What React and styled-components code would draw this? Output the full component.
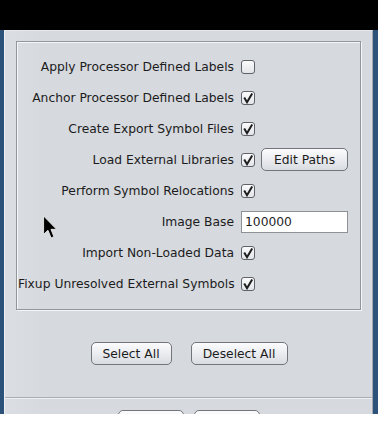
import React from "react";
import styled, { createGlobalStyle } from "styled-components";

const Global = createGlobalStyle`
  html, body { margin: 0; padding: 0; background: #ffffff; }
  body { font-family: "DejaVu Sans", "Liberation Sans", sans-serif; }
`;

const Screen = styled.div`
  position: relative;
  width: 378px;
  height: 414px;
  display: flex;
  flex-direction: column;
  overflow: hidden;
`;

const TopBar = styled.div`
  height: 30px;
  background: #000;
  flex: none;
`;

const Desktop = styled.div`
  flex: 1;
  display: flex;
  background: #2c5279;
  padding: 0 5px 0 4px;
  min-height: 0;
`;

const Window = styled.div`
  flex: 1;
  display: flex;
  flex-direction: column;
  background: linear-gradient(90deg, #dadde2 0%, #d6d9de 12%, #d6d9de 100%);
  border-left: 1px solid #eef0f3;
  border-top: 1px solid #e6e8eb;
  border-right: 1px solid #a3a6ab;
  overflow: hidden;
  font-size: 12.3px;
  color: #1c1c1c;
`;

const MainPanel = styled.div`
  display: flex;
  flex-direction: column;
  padding: 10px 11px 0 11px;
  height: 367px;
  box-sizing: border-box;
  border-bottom: 1px solid #a9acb1;
  flex: none;
`;

const Etched = styled.div`
  height: 269px;
  box-sizing: border-box;
  border: 1px solid #92959a;
  box-shadow: inset 1px 1px 0 #f5f6f8, 1px 1px 0 #f5f6f8;
  padding: 9px 0 0 1px;
  display: grid;
  grid-template-columns: 216px 1fr;
  grid-auto-rows: 31px;
  column-gap: 7px;
  align-content: start;
`;

const Label = styled.div`
  text-align: right;
  align-self: center;
  white-space: nowrap;
  line-height: 14px;
`;

const Controls = styled.div`
  display: flex;
  align-items: center;
  gap: 6px;
`;

const Box = styled.div`
  width: 14px;
  height: 14px;
  box-sizing: border-box;
  border: 1px solid #5f6269;
  border-radius: 3px;
  background: linear-gradient(180deg, #fbfbfc 0%, #e3e5e9 100%);
  display: flex;
  align-items: center;
  justify-content: center;
  flex: none;
`;

const Button = styled.div`
  height: 23px;
  width: ${p => p.$w}px;
  box-sizing: border-box;
  border: 1px solid #72767c;
  border-radius: 5px;
  background: linear-gradient(180deg, #fcfcfd 0%, #eceef1 45%, #d9dce1 100%);
  display: flex;
  align-items: center;
  justify-content: center;
  white-space: nowrap;
  font-size: 12.3px;
  color: #1c1c1c;
  flex: none;
`;

const Field = styled.div`
  width: 107px;
  height: 22px;
  box-sizing: border-box;
  border: 1px solid #8e9196;
  background: #fff;
  padding: 0 3px;
  display: flex;
  align-items: center;
`;

const ButtonRow = styled.div`
  display: flex;
  justify-content: center;
  gap: 19px;
  padding-top: 32px;
  padding-left: 1px;
`;

const BottomBar = styled.div`
  flex: 1;
  border-top: 1px solid #eef0f2;
  display: flex;
  justify-content: center;
  gap: 10px;
  padding: 11px 0 0 0;
  overflow: hidden;
`;

const Cursor = styled.svg`
  position: absolute;
  left: 43px;
  top: 215px;
`;

function Check({ on }) {
  return (
    <Box>
      {on && (
        <svg width="12" height="12" viewBox="0 0 12 12">
          <path d="M2.2 5.6 L5 10.2 L10.2 1.4" fill="none" stroke="#1e1e1e" strokeWidth="2" strokeLinejoin="miter" />
        </svg>
      )}
    </Box>
  );
}

const rows = [
  { label: "Apply Processor Defined Labels", on: false },
  { label: "Anchor Processor Defined Labels", on: true },
  { label: "Create Export Symbol Files", on: true },
  { label: "Load External Libraries", on: true, extra: "edit" },
  { label: "Perform Symbol Relocations", on: true },
  { label: "Image Base", field: "100000" },
  { label: "Import Non-Loaded Data", on: true },
  { label: "Fixup Unresolved External Symbols", on: true },
];

export default function App() {
  return (
    <>
      <Global />
      <Screen>
        <TopBar />
        <Desktop>
          <Window>
            <MainPanel>
              <Etched>
                {rows.map(r => (
                  <React.Fragment key={r.label}>
                    <Label>{r.label}</Label>
                    <Controls>
                      {r.field ? (
                        <Field>{r.field}</Field>
                      ) : (
                        <Check on={r.on} />
                      )}
                      {r.extra === "edit" && <Button $w={87}>Edit Paths</Button>}
                    </Controls>
                  </React.Fragment>
                ))}
              </Etched>
              <ButtonRow>
                <Button $w={81}>Select All</Button>
                <Button $w={97}>Deselect All</Button>
              </ButtonRow>
            </MainPanel>
            <BottomBar>
              <Button $w={66} aria-label="OK" />
              <Button $w={66} aria-label="Cancel" />
            </BottomBar>
          </Window>
        </Desktop>
        <Cursor width="15" height="25" viewBox="0 0 13 21">
          <path d="M0.5 0.5 L0.5 16.5 L4.3 12.9 L7 19.5 L9.5 18.5 L6.9 12.1 L11.8 12.1 Z" fill="#000" stroke="#e8e8e8" strokeWidth="0.8" />
        </Cursor>
      </Screen>
    </>
  );
}
